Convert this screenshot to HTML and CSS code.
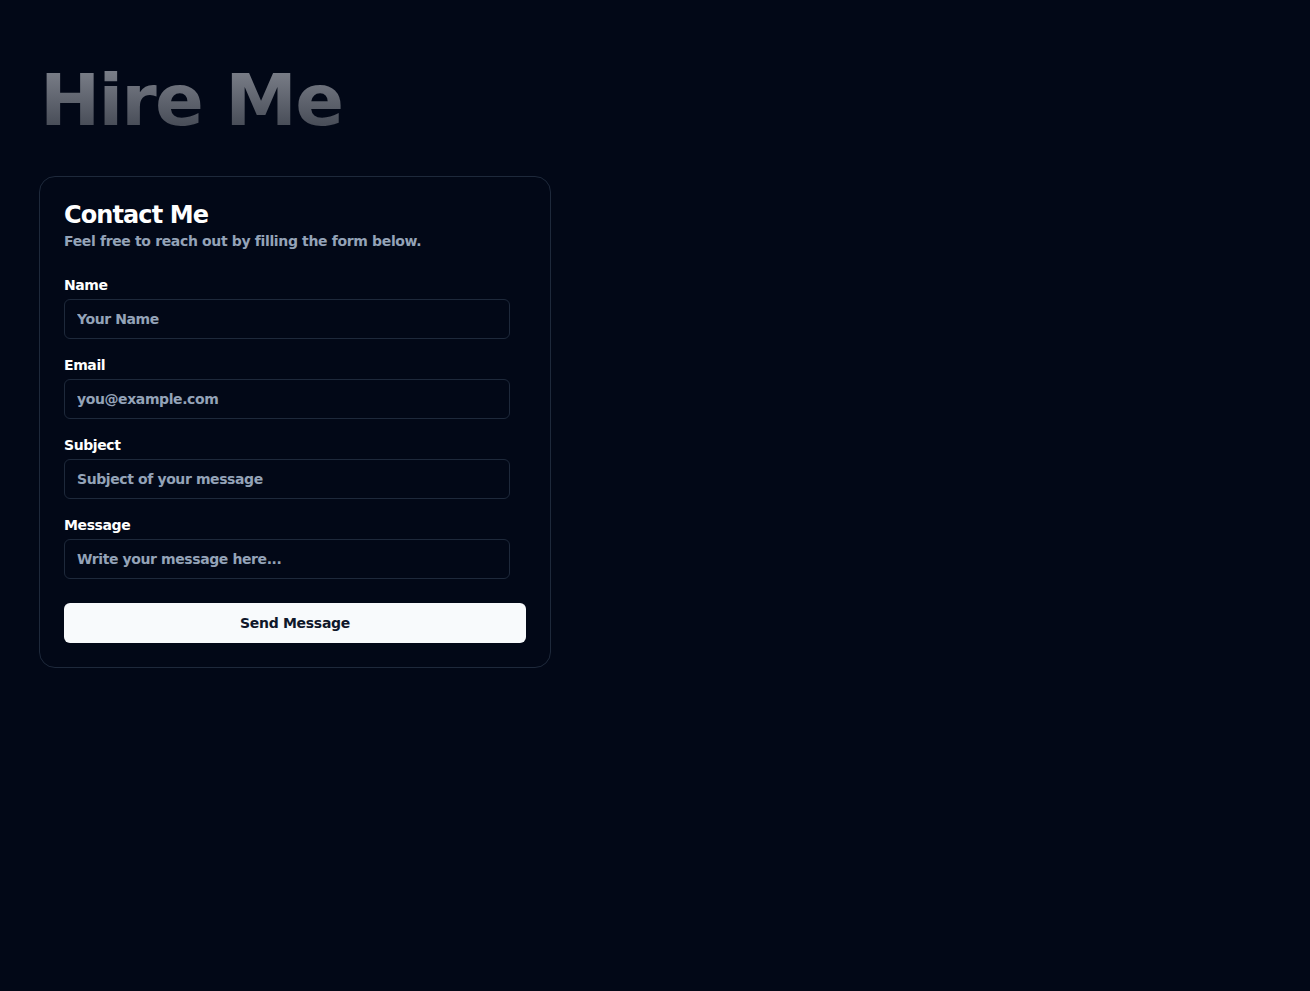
FILE: index.html
```html
<!DOCTYPE html>
<html lang="en">
<head>
<meta charset="utf-8">
<title>Hire Me</title>
<link rel="stylesheet" href="styles.css">
</head>
<body>
<main class="page">
  <h1 class="hero">Hire Me</h1>
  <section class="card">
    <h2 class="card-title">Contact Me</h2>
    <p class="card-sub">Feel free to reach out by filling the form below.</p>
    <form class="form">
      <div class="field">
        <label class="label" for="name">Name</label>
        <input class="input" id="name" type="text" placeholder="Your Name">
      </div>
      <div class="field">
        <label class="label" for="email">Email</label>
        <input class="input" id="email" type="email" placeholder="you@example.com">
      </div>
      <div class="field">
        <label class="label" for="subject">Subject</label>
        <input class="input" id="subject" type="text" placeholder="Subject of your message">
      </div>
      <div class="field">
        <label class="label" for="message">Message</label>
        <input class="input" id="message" type="text" placeholder="Write your message here...">
      </div>
      <button class="btn" type="button">Send Message</button>
    </form>
  </section>
</main>
</body>
</html>
```

FILE: styles.css
```css
* { box-sizing: border-box; }
html, body { margin: 0; padding: 0; }
body {
  background: #020817;
  color: #f8fafc;
  font-family: "DejaVu Sans", "Liberation Sans", sans-serif;
  font-weight: 700;
  min-height: 100vh;
}
.page {
  padding: 64px 39px 40px;
}
.hero {
  margin: 0 0 40px 1px;
  font-size: 72px;
  line-height: 72px;
  font-weight: 700;
  letter-spacing: -1.8px;
  background: linear-gradient(180deg, #80848e 0%, #3f444f 100%);
  -webkit-background-clip: text;
  background-clip: text;
  color: transparent;
  display: inline-block;
}
.card {
  width: 512px;
  border: 1px solid #1e293b;
  border-radius: 16px;
  padding: 22px 24px 24px;
}
.card-title {
  margin: 0;
  font-size: 24px;
  line-height: 32px;
  letter-spacing: -0.9px;
  color: #ffffff;
}
.card-sub {
  margin: 0;
  font-size: 14px;
  line-height: 20px;
  color: #94a3b8;
  letter-spacing: -0.35px;
}
.form {
  margin-top: 24px;
  display: flex;
  flex-direction: column;
  gap: 16px;
}
.field {
  display: flex;
  flex-direction: column;
  gap: 4px;
}
.label {
  font-size: 14px;
  line-height: 20px;
  color: #ffffff;
  letter-spacing: -0.4px;
}
.input {
  width: 446px;
  height: 40px;
  background: transparent;
  border: 1px solid #1e293b;
  border-radius: 6px;
  padding: 0 12px;
  font-family: inherit;
  font-weight: 700;
  font-size: 14px;
  letter-spacing: -0.4px;
  color: #f8fafc;
  outline: none;
}
.input::placeholder { color: #94a3b8; opacity: 1; }
.btn {
  margin-top: 8px;
  width: 100%;
  height: 40px;
  border: 0;
  border-radius: 6px;
  background: #f8fafc;
  color: #0f172a;
  font-family: inherit;
  font-weight: 700;
  font-size: 14px;
  letter-spacing: -0.3px;
}
```
